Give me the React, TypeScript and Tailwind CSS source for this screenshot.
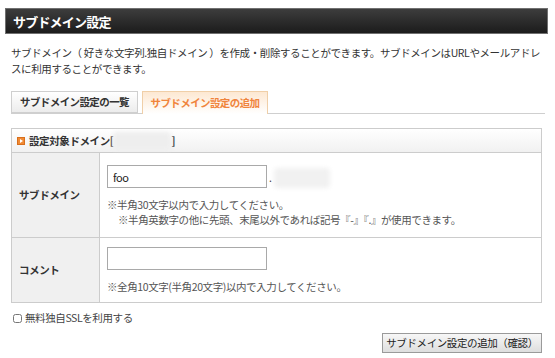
import React, { useState } from 'react';

export default function App() {
  const [sub, setSub] = useState('foo');
  const [comment, setComment] = useState('');
  const [ssl, setSsl] = useState(false);

  return (
    <div
      className="w-[555px] h-[358px] bg-white text-[#333] text-[10.5px] tracking-[-0.4px] overflow-hidden"
      style={{ fontFamily: '"Noto Sans CJK JP", "Noto Sans", sans-serif' }}
    >
      {/* Title bar */}
      <div className="mx-[5px] mt-[8px] w-[543px] h-[26px] border border-[#707070] bg-gradient-to-b from-[#3d3d3d] to-[#1c1c1c] flex items-center pl-[7px]">
        <h1 className="text-white font-bold text-[13px] tracking-[-0.8px] leading-none">サブドメイン設定</h1>
      </div>

      {/* Description */}
      <p className="mt-[11px] px-[11px] leading-[16px]">
        サブドメイン（ 好きな文字列.独自ドメイン ）を作成・削除することができます。サブドメインはURLやメールアドレスに利用することができます。
      </p>

      {/* Tabs */}
      <div className="mt-[15px] ml-[11px] w-[534px] flex items-end h-[22px] border-b border-[#cfcfcf]">
        <div className="h-[22px] w-[127px] border border-[#cfcfcf] bg-gradient-to-b from-white to-[#ececec] flex items-center justify-center font-bold text-[#333] tracking-[-0.6px] whitespace-nowrap">
          サブドメイン設定の一覧
        </div>
        <div className="ml-[4px] h-[23px] -mb-px w-[126px] border border-b-0 border-[#f0cfa8] bg-gradient-to-b from-[#fde8d2] to-white flex items-center justify-center font-bold text-[#f0843c] tracking-[-0.6px] whitespace-nowrap">
          サブドメイン設定の追加
        </div>
      </div>

      {/* Form table */}
      <div className="mt-[14px] ml-[11px] w-[531px] border border-[#cccccc]">
        <div className="h-[24px] bg-gradient-to-b from-white to-[#f1f1f1] border-b border-[#cccccc] flex items-center pl-[5px] font-bold">
          <span className="w-[8px] h-[8px] bg-[#f08a34] border border-[#d86f1c] mr-[4px] flex items-center justify-center">
            <span className="w-0 h-0 border-y-[2px] border-y-transparent border-l-[3px] border-l-white" />
          </span>
          設定対象ドメイン[
          <span className="inline-block w-[58px] h-[18px] bg-[#eeeeee] blur-[2px] rounded-sm" />]
        </div>

        <div className="flex border-b border-[#cccccc]">
          <div className="w-[88px] bg-[#f0f0f0] border-r border-[#cccccc] flex items-center pl-[7px] font-bold">
            サブドメイン
          </div>
          <div className="flex-1 pl-[7px] pt-[12px] pb-[10px]">
            <div className="flex items-end">
              <input
                value={sub}
                onChange={(e) => setSub(e.target.value)}
                className="w-[160px] h-[23px] border border-[#a9a9a9] px-[5px] text-[11px] text-[#222] outline-none"
              />
              <span className="ml-[2px] mb-[2px]">.</span>
              <span className="ml-[2px] inline-block w-[56px] h-[20px] bg-[#f1f1f1] blur-[2px] rounded-sm" />
            </div>
            <p className="mt-[9px] leading-[15px] text-[#555]">※半角30文字以内で入力してください。</p>
            <p className="pl-[11px] leading-[15px] text-[#555]">
              ※半角英数字の他に先頭、末尾以外であれば記号『-』『.』が使用できます。
            </p>
          </div>
        </div>

        <div className="flex">
          <div className="w-[88px] bg-[#f0f0f0] border-r border-[#cccccc] flex items-center pl-[7px] font-bold">
            コメント
          </div>
          <div className="flex-1 pl-[7px] pt-[9px] pb-[8px]">
            <input
              value={comment}
              onChange={(e) => setComment(e.target.value)}
              className="w-[160px] h-[23px] border border-[#a9a9a9] px-[5px] text-[11px] outline-none"
            />
            <p className="mt-[9px] leading-[15px] text-[#555]">※全角10文字(半角20文字)以内で入力してください。</p>
          </div>
        </div>
      </div>

      {/* SSL */}
      <label className="mt-[7px] ml-[13px] flex items-center gap-[3px] text-[#444] cursor-pointer leading-[16px]">
        <input
          type="checkbox"
          checked={ssl}
          onChange={(e) => setSsl(e.target.checked)}
          className="w-[9px] h-[9px] m-0 accent-[#777]"
        />
        無料独自SSLを利用する
      </label>

      {/* Submit */}
      <div className="mt-[7px] w-[542px] flex justify-end">
        <button className="w-[160px] h-[20px] border border-[#9a9a9a] bg-gradient-to-b from-[#f7f7f7] to-[#dedede] text-[#222] leading-none whitespace-nowrap">
          サブドメイン設定の追加（確認）
        </button>
      </div>
    </div>
  );
}
